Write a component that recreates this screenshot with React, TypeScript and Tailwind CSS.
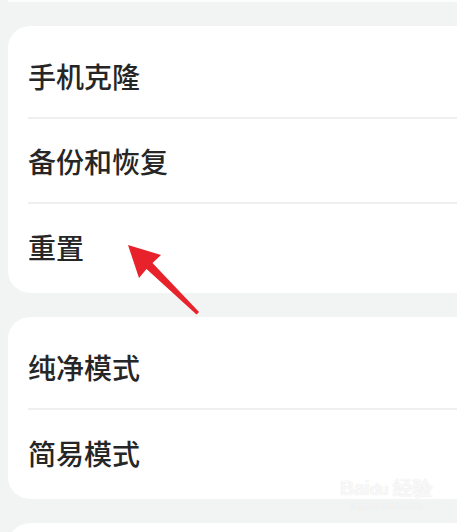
const cjk = { fontFamily: '"Noto Sans CJK SC", "Noto Sans", sans-serif' };

const Row = ({ label, last }: { label: string; last?: boolean }) => (
  <div className="h-[85px] pl-5 flex flex-col">
    <div className="flex-1 flex items-center text-[28px] font-medium text-[#262626] leading-none">
      {label}
    </div>
    {!last && <div className="h-[2px] bg-[#efefef]" />}
  </div>
);

const Card = ({ items }: { items: string[] }) => (
  <div className="ml-2 -mr-6 bg-white rounded-[22px] pt-2 pb-1">
    {items.map((t, i) => (
      <Row key={t} label={t} last={i === items.length - 1} />
    ))}
  </div>
);

export default function App() {
  return (
    <div className="relative w-[457px] h-[532px] overflow-hidden bg-[#f2f3f3]" style={cjk}>
      <div className="h-[2px] ml-2 bg-white/70" />
      <div className="pt-6 flex flex-col gap-6">
        <Card items={["手机克隆", "备份和恢复", "重置"]} />
        <Card items={["纯净模式", "简易模式"]} />
        <div className="ml-2 -mr-6 h-10 bg-white rounded-t-[22px]" />
      </div>

      {/* red arrow pointing at 重置 */}
      <svg className="absolute left-0 top-0" width="457" height="532">
        <polygon
          points="128,245 161,255 152.5,263 199,312 196.5,314.5 146.5,269 139,278"
          fill="#e8222b"
        />
      </svg>

      {/* watermark */}
      <div className="absolute left-[340px] top-[478px] flex flex-col items-center text-white/80 leading-none">
        <div className="text-[20px] font-bold tracking-tight" style={{ fontFamily: '"Liberation Sans", sans-serif', textShadow: "0 0 1px #d8d8d8" }}>
          Bai<span className="text-[16px]">du</span> 经验
        </div>
        <div className="text-[9px] mt-1" style={{ fontFamily: '"Liberation Sans", sans-serif', textShadow: "0 0 1px #d8d8d8" }}>
          jingyan.baidu.com
        </div>
      </div>
    </div>
  );
}
